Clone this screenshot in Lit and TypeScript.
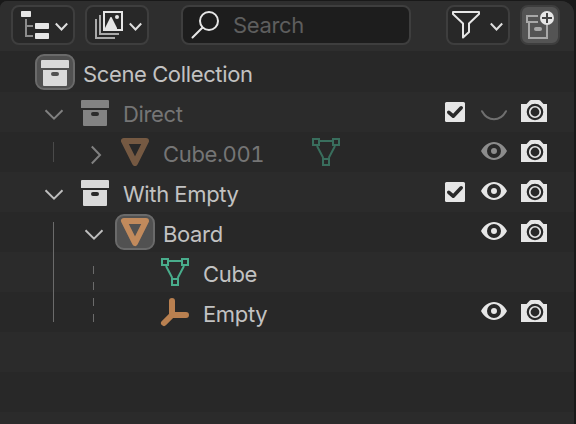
import { LitElement, html, svg, css, nothing } from "lit";
import { customElement, property } from "lit/decorators.js";
import { classMap } from "lit/directives/class-map.js";

type Cell = "none" | "open" | "closed" | "line" | "lineStart" | "lineEnd" | "lineShort" | "dashA" | "dashB";
type Kind = "collection" | "object" | "mesh" | "empty";

interface Row {
  label: string;
  kind: Kind;
  cells: Cell[];
  dim?: boolean;
  active?: boolean;
  data?: boolean;
  check?: boolean;
  eye?: "on" | "dim" | "shut";
  camera?: boolean;
}

const rows: Row[] = [
  { label: "Scene Collection", kind: "collection", cells: [], active: true },
  { label: "Direct", kind: "collection", cells: ["open"], dim: true, check: true, eye: "shut", camera: true },
  { label: "Cube.001", kind: "object", cells: ["lineShort", "closed"], dim: true, data: true, eye: "dim", camera: true },
  { label: "With Empty", kind: "collection", cells: ["open"], check: true, eye: "on", camera: true },
  { label: "Board", kind: "object", cells: ["lineStart", "open"], active: true, eye: "on", camera: true },
  { label: "Cube", kind: "mesh", cells: ["line", "dashA", "none"] },
  { label: "Empty", kind: "empty", cells: ["lineEnd", "dashB", "none"], eye: "on", camera: true },
];

const glyphs = {
  none: nothing,
  open: svg`<path class="arrow" d="M10.5 18.2L19 26.700L27.5 18.2"/>`,
  closed: svg`<path class="arrow" d="M16.8 14.5L25 23L16.8 31.5"/>`,
  line: svg`<path class="guide" d="M18.5 0V40"/>`,
  lineStart: svg`<path class="guide" d="M18.5 10V40"/>`,
  lineEnd: svg`<path class="guide" d="M18.5 0V30"/>`,
  lineShort: svg`<path class="guide" d="M18.5 10V30"/>`,
  dashA: svg`<path class="guide" d="M18.5 14V22M18.5 30V38"/>`,
  dashB: svg`<path class="guide" d="M18.5 6V14M18.5 22V30"/>`,
  collection: svg`<path fill="#dadada" fill-rule="evenodd" d="M7 8h26a1 1 0 0 1 1 1v7H6V9a1 1 0 0 1 1-1zM8 18h24v15a1 1 0 0 1-1 1H9a1 1 0 0 1-1-1zM18 20a2 2 0 0 0 0 4h4a2 2 0 0 0 0-4z"/>`,
  object: svg`<path fill="none" stroke="#c18a5c" stroke-width="6" stroke-linejoin="round" d="M9 9H31L20 31Z"/>`,
  mesh: svg`<g fill="none" stroke="#49ad8c" stroke-width="2"><path d="M14 9H26M11 14L17.3 26M29 14L22.7 26"/><path d="M7 7h6v6H7zM27 7h6v6h-6zM17 27h6v6h-6z"/></g>`,
  empty: svg`<path fill="none" stroke="#b98050" stroke-width="6" stroke-linecap="round" stroke-linejoin="round" d="M17 9V23H31M17 23L9 31"/>`,
  check: svg`<rect x="10" y="10" width="20" height="20" rx="1.500" fill="#e6e6e6"/><path fill="none" stroke="#292929" stroke-width="3.600" stroke-linecap="round" stroke-linejoin="round" d="M13.8 20.300L18.2 24.200L26.2 15.800"/>`,
  eye: svg`<path fill="#e6e6e6" fill-rule="evenodd" d="M6 19C9 13.500 13.500 10 19 10S29 13.500 32 19C29 24.500 24.500 28 19 28S9 24.500 6 19zM19 12a7 7 0 1 0 0 14a7 7 0 1 0 0-14zM19 16a3 3 0 1 1 0 6a3 3 0 1 1 0-6z"/>`,
  shut: svg`<path fill="none" stroke="#6f6f6f" stroke-width="2" stroke-linecap="round" d="M7 19.200C13 30 25 30 31 19.200"/>`,
  camera: svg`<path fill="#e6e6e6" d="M6 12H11.500L14.500 8.700Q15.200 8 16.200 8H23.800Q24.800 8 25.500 8.700L28.500 12H32V30H6z"/><circle cx="20" cy="20" r="7.200" fill="none" stroke="#292929" stroke-width="2.200"/><circle cx="20" cy="20" r="4.400" fill="#292929"/>`,
};

const rowIcon = (name: keyof typeof glyphs) =>
  html`<svg width="40" height="40" viewBox="0 0 40 40">${glyphs[name]}</svg>`;

@customElement("outliner-row")
class OutlinerRow extends LitElement {
  @property({ attribute: false }) row!: Row;

  static styles = css`
    :host { display: flex; height: 40px; }
    svg { display: block; flex: none; }
    .arrow { fill: none; stroke: #bdbdbd; stroke-width: 2; }
    .guide { fill: none; stroke: #6b6b6b; stroke-width: 1; }
    .name, .flags { display: flex; }
    .name { flex: 1; padding-left: 35px; }
    .dim .arrow { stroke: #808080; }
    .dim .guide { stroke: #4a4a4a; }
    .dim .icon { opacity: 0.5; }
    .icon { box-sizing: border-box; width: 40px; height: 40px; }
    .active .icon { height: 36px; margin-top: 2px; border: 2px solid #6a6a6a; border-radius: 9px; background: #515151; }
    .active .icon svg { margin: -4px -2px; }
    .label { height: 40px; padding: 2px 0 0 8px; line-height: 40px; color: #c2c2c2; white-space: nowrap; }
    .dim .label { color: #757575; }
    .data { margin-left: 42px; opacity: 0.53; }
    .flags { flex: none; width: 139px; }
    .slot { flex: none; width: 40px; }
    .faded { opacity: 0.53; }
  `;

  render() {
    const r = this.row;
    return html`
      <div class=${classMap({ name: true, dim: !!r.dim, active: !!r.active })}>
        ${r.cells.map((c) => rowIcon(c))}
        <div class="icon">${rowIcon(r.kind)}</div>
        <span class="label">${r.label}</span>
        ${r.data ? html`<div class="data">${rowIcon("mesh")}</div>` : nothing}
      </div>
      <div class="flags">
        <div class="slot">${r.check ? rowIcon("check") : nothing}</div>
        <div class=${classMap({ slot: true, faded: r.eye === "dim" })}>
          ${r.eye ? rowIcon(r.eye === "shut" ? "shut" : "eye") : nothing}
        </div>
        <div class="slot">${r.camera ? rowIcon("camera") : nothing}</div>
      </div>
    `;
  }
}

@customElement("app-root")
class AppRoot extends LitElement {
  static styles = css`
    :host {
      display: block; box-sizing: border-box; height: 424px; padding: 1px 2px 0 0; overflow: hidden;
      background: #191919; font: 22px/40px Inter, "Liberation Sans", sans-serif;
      font-optical-sizing: none; font-feature-settings: "tnum"; letter-spacing: -0.35px;
    }
    .panel { height: 423px; overflow: hidden; border-radius: 7px 13px 0 0; background: #2b2b2b; }
    .header { display: flex; box-sizing: border-box; height: 50px; padding: 4px 14px 0 11px; background: #2e2e2e; }
    .button {
      box-sizing: border-box; width: 64px; height: 40px; border: 2px solid #3e3e3e;
      border-radius: 8px; background: #282828;
    }
    .button svg, .search svg { display: block; margin: -2px; flex: none; }
    .gap { margin-left: 10px; }
    .search {
      display: flex; box-sizing: border-box; width: 230px; height: 40px; margin: 0 35px 0 32px;
      border: 2px solid #3e3e3e; border-radius: 8px; background: #1d1d1d; color: #5e5e5e;
    }
    .hint { padding-left: 14px; line-height: 36px; }
    .new { width: 40px; background: #545454; }
    .tree { padding-top: 1px; background: #282828; }
    .stripe { height: 40px; background: #2b2b2b; }
    .stripe:nth-child(odd) { background: #282828; }
  `;

  render() {
    return html`
      <div class="panel">
        <div class="header">
          <div class="button">
            <svg width="64" height="40" viewBox="0 0 64 40">
              <path fill="none" stroke="#8c8c8c" stroke-width="2" d="M15 14V31H22M15 21H22"/>
              <g fill="#e6e6e6"><rect x="10" y="6" width="10" height="6" rx=".7"/><rect x="24" y="18" width="14" height="6" rx=".7"/><rect x="24" y="28" width="14" height="6" rx=".7"/></g>
              <path fill="none" stroke="#dedede" stroke-width="2" d="M44.800 18.500L50.500 24.500L56.200 18.500"/>
            </svg>
          </div>
          <div class="button gap">
            <svg width="64" height="40" viewBox="0 0 64 40">
              <path fill="none" stroke="#aaa" stroke-width="2" d="M15 10V29H34M11 14V33H30"/>
              <rect x="19" y="7" width="18" height="18" fill="none" stroke="#e6e6e6" stroke-width="2"/>
              <path fill="#e6e6e6" d="M20 23L25.500 12H26.500L32 23V25H20z"/><circle cx="32" cy="12" r="2" fill="#e6e6e6"/>
              <path fill="none" stroke="#dedede" stroke-width="2" d="M44.800 18.500L50.500 24.500L56.200 18.500"/>
            </svg>
          </div>
          <div class="search">
            <svg width="40" height="40" viewBox="0 0 40 40">
              <path fill="none" stroke="#e6e6e6" stroke-width="2" stroke-linecap="round" d="M21.300 22.700L11.500 32.500"/>
              <circle cx="28" cy="16" r="9" fill="none" stroke="#e6e6e6" stroke-width="2"/>
            </svg>
            <span class="hint">Search</span>
          </div>
          <div class="button">
            <svg width="64" height="40" viewBox="0 0 64 40">
              <path fill="none" stroke="#e6e6e6" stroke-width="2" stroke-linejoin="round" d="M7 7H33V9L23 18.500V27L17 32.500V18.500L7 9z"/>
              <path fill="none" stroke="#dedede" stroke-width="2" d="M44.800 18.500L50.500 24.500L56.200 18.500"/>
            </svg>
          </div>
          <div class="button gap new">
            <svg width="40" height="40" viewBox="0 0 40 40">
              <path fill="none" stroke="#a8a8a8" stroke-width="2" d="M18 11H7V17H18M9 17V33H27V20"/>
              <rect x="14" y="22" width="8" height="4" rx="2" fill="#a8a8a8"/>
              <circle cx="27" cy="13" r="7" fill="#e6e6e6"/>
              <path fill="none" stroke="#444" stroke-width="2" d="M22 13H32M27 8V18"/>
            </svg>
          </div>
        </div>
        <div class="tree">
          ${rows.map((r) => html`<outliner-row class="stripe" .row=${r}></outliner-row>`)}
          <div class="stripe"></div>
          <div class="stripe"></div>
          <div class="stripe"></div>
        </div>
      </div>
    `;
  }
}
